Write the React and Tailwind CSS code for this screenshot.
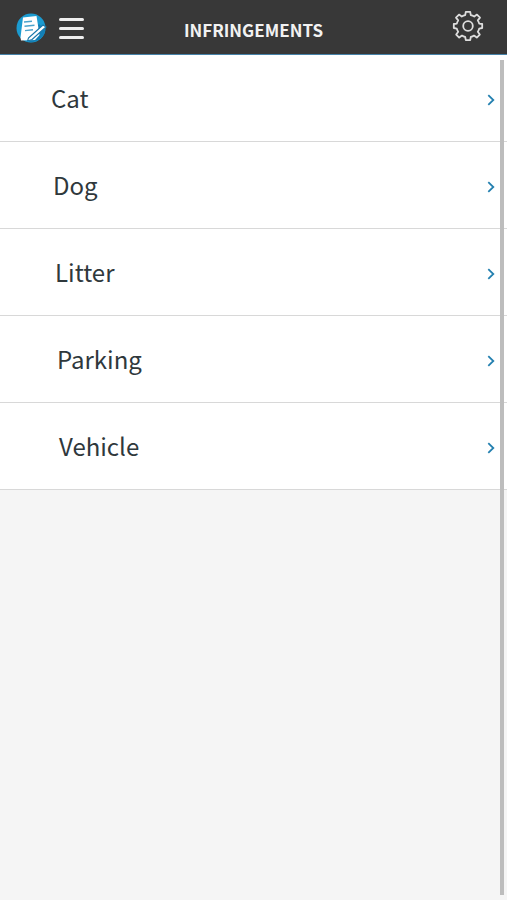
const categories = ['Cat', 'Dog', 'Litter', 'Parking', 'Vehicle'];

function LogoIcon() {
  return (
    <svg viewBox="0 0 32 32" className="size-8" aria-hidden="true">
      <circle cx="16" cy="16" r="14.5" fill="#1b9bd0" />
      <path d="M10 25L15 30.3C24 30 29.5 24 30.3 18L24 12Z" fill="#127fb6" />
      <path d="M8 5.5L21.5 4L24.5 23L20 28L6 28.5L5.5 25.5Z" fill="#fff" />
      <path d="M9 10L17 9.2M9.5 14.3L19.5 13.2M10 18.6L18 17.8" stroke="#4ba3cc" strokeWidth="1.4" fill="none" />
      <path d="M13.5 26L28 13L31 15L17 27.5L12.5 29Z" fill="#fff" stroke="#1a78aa" strokeWidth="1.1" strokeLinejoin="round" />
    </svg>
  );
}

function GearIcon() {
  return (
    <svg viewBox="0 0 32 32" className="size-8" fill="none" stroke="#dedede" strokeWidth="1.8" strokeLinejoin="round" aria-hidden="true">
      <path d="M13.8 1.8H18.2L18.8 5.2Q20.6 5.6 22.2 6.6L25 4.6L28 7.6L25.8 10.4Q26.8 11.8 27.2 13.6L30.2 14V18L27.2 18.6Q26.8 20.4 25.8 21.8L27.8 24.6L24.8 27.6L22 25.6Q20.6 26.6 18.8 27L18.2 30.2H13.8L13.2 27Q11.4 26.6 10 25.6L7.2 27.6L4.2 24.6L6.2 21.8Q5.2 20.4 4.8 18.6L1.8 18V14L4.8 13.6Q5.2 11.8 6.2 10.4L4 7.6L7 4.6L9.8 6.6Q11.4 5.6 13.2 5.2Z" />
      <circle cx="16" cy="16" r="4.8" />
    </svg>
  );
}

function ChevronIcon() {
  return (
    <svg viewBox="0 0 8 12" className="h-3 w-2" fill="none" stroke="#2480b0" strokeWidth="1.8" aria-hidden="true">
      <path d="M1.3 1.2L6.3 6L1.3 10.8" />
    </svg>
  );
}

export default function App() {
  return (
    <div className="relative min-h-screen bg-[#f5f5f5] font-['Noto_Sans_CJK_SC',sans-serif] text-[#2f383c]">
      <header className="grid h-[55px] grid-cols-[1fr_auto_1fr] items-center border-b border-[#4682a8] bg-[#383838]">
        <div className="flex items-center gap-3 pt-0.5 pl-[15px]">
          <LogoIcon />
          <button type="button" aria-label="Menu" className="flex w-[25px] flex-col gap-[6px]">
            <span className="h-[3px] rounded-sm bg-[#eeeeee]" />
            <span className="h-[3px] rounded-sm bg-[#eeeeee]" />
            <span className="h-[3px] rounded-sm bg-[#eeeeee]" />
          </button>
        </div>
        <h1 className="pt-1.5 text-[17px] font-bold text-[#f2f2f2]">INFRINGEMENTS</h1>
        <button type="button" aria-label="Settings" className="mr-[23px] justify-self-end pb-0.5">
          <GearIcon />
        </button>
      </header>
      <main>
        <ul>
          {categories.map((name, index) => (
            <li key={name} className="border-b border-[#d8d8d8] bg-white">
              <button
                type="button"
                className="flex h-[86px] w-full items-center justify-between pt-[3px] pr-3 text-left text-2xl"
                style={{ paddingLeft: 51 + index * 2 }}
              >
                <span className="pb-1">{name}</span>
                <ChevronIcon />
              </button>
            </li>
          ))}
        </ul>
      </main>
      <div className="absolute top-[60px] right-[3px] bottom-[5px] w-1 bg-[#bdbdbd]" />
    </div>
  );
}
